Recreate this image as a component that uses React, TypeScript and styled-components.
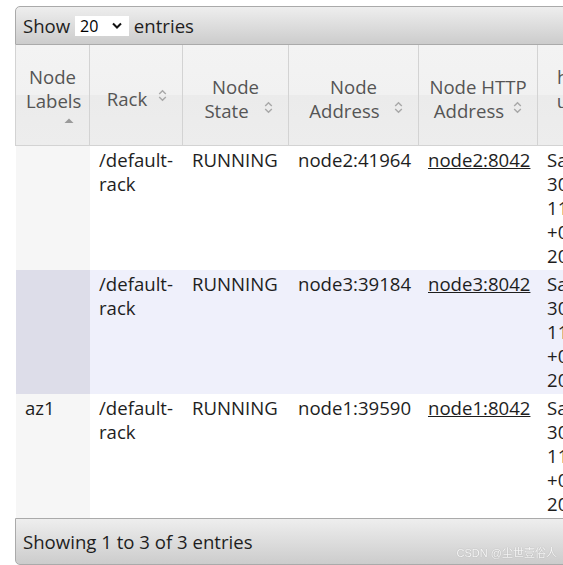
import React from 'react';
import styled, { createGlobalStyle } from 'styled-components';

const FONT = `"Open Sans", "Noto Sans CJK SC", sans-serif`;

const GlobalStyle = createGlobalStyle`
  html, body { margin: 0; padding: 0; background: #fff; overflow: hidden; }
  body { font-family: ${FONT}; }
`;

const Wrapper = styled.div`
  margin: 6px 0 0 15px;
  width: 623px;
  font-family: ${FONT};
  font-size: 18.6px;
  color: #1e1e1e;
`;

const Bar = styled.div<{ $pos: 'top' | 'bottom' }>`
  display: flex;
  align-items: center;
  box-sizing: border-box;
  height: ${(p) => (p.$pos === 'top' ? 39 : 47)}px;
  padding: 0 7px;
  border: 1px solid #aaa;
  border-radius: ${(p) => (p.$pos === 'top' ? '5px 5px 0 0' : '0 0 5px 5px')};
  background: linear-gradient(to bottom, #eeeeee 0%, #cccccc 100%);
  color: #1e1e1e;
  white-space: pre;
`;

const Select = styled.span`
  display: inline-flex;
  align-items: center;
  justify-content: space-between;
  box-sizing: border-box;
  width: 54px;
  height: 20px;
  margin: 0;
  padding: 0 7px 0 5px;
  background: #fff;
  font-size: 16px;
  color: #000;
`;

const Table = styled.table`
  border-collapse: separate;
  border-spacing: 0;
  table-layout: fixed;
  width: 623px;
`;

const Col = styled.col<{ $w: number }>`
  width: ${(p) => p.$w}px;
`;

const Th = styled.th<{ $first?: boolean }>`
  box-sizing: border-box;
  padding: 20px 10px 12px 10px;
  border-right: 1px solid #d3d3d3;
  border-bottom: 1px solid #d3d3d3;
  border-left: ${(p) => (p.$first ? '1px solid #d3d3d3' : 'none')};
  background: linear-gradient(to bottom, #f3f3f3 0%, #f1f1f1 50%, #ebebeb 50%, #ededed 100%);
  color: #555;
  font-weight: normal;
  text-align: center;
  vertical-align: middle;
  line-height: 24px;
  overflow: visible;
`;

const SortIcon = styled.span<{ $w: number }>`
  float: right;
  display: block;
  width: ${(p) => p.$w}px;
  height: 16px;
  margin: 0 5px 4px 4px;
  svg { display: block; }
`;

const Td = styled.td<{ $bg: string; $first?: boolean }>`
  box-sizing: border-box;
  padding: 2px 9px;
  line-height: 24px;
  vertical-align: top;
  background: ${(p) => p.$bg};
  background-clip: padding-box;
  border-left: ${(p) => (p.$first ? '1px solid transparent' : 'none')};
  color: #1e1e1e;
`;

const Link = styled.a`
  color: #1e1e1e;
  text-decoration: underline;
`;

const Watermark = styled.div`
  position: fixed;
  right: 6px;
  bottom: 4px;
  font-family: "Liberation Sans", "Noto Sans CJK SC", sans-serif;
  font-size: 11px;
  line-height: 16px;
  color: rgba(255, 255, 255, 0.9);
  text-shadow: 0 0 1px rgba(0, 0, 0, 0.3);
  white-space: nowrap;
`;

type Sort = 'asc' | 'both';

const columns: { title: string; width: number; sort: Sort }[] = [
  { title: 'Node Labels', width: 75, sort: 'asc' },
  { title: 'Rack', width: 93, sort: 'both' },
  { title: 'Node State', width: 106, sort: 'both' },
  { title: 'Node Address', width: 130, sort: 'both' },
  { title: 'Node HTTP Address', width: 119, sort: 'both' },
  { title: 'health-update', width: 100, sort: 'both' },
];

const rows = [
  { labels: '', rack: '/default-rack', state: 'RUNNING', addr: 'node2:41964', http: 'node2:8042', update: 'Sat Sep 30 11:04:21 +0800 2023' },
  { labels: '', rack: '/default-rack', state: 'RUNNING', addr: 'node3:39184', http: 'node3:8042', update: 'Sat Sep 30 11:04:22 +0800 2023' },
  { labels: 'az1', rack: '/default-rack', state: 'RUNNING', addr: 'node1:39590', http: 'node1:8042', update: 'Sat Sep 30 11:04:20 +0800 2023' },
];

function SortGlyph({ dir }: { dir: Sort }) {
  if (dir === 'asc') {
    return (
      <svg width="10" height="16" viewBox="0 0 10 16">
        <polygon points="0.5,10 5,5.5 9.5,10" fill="#9a9a9a" />
      </svg>
    );
  }
  return (
    <svg width="9" height="16" viewBox="0 0 9 16">
      <polyline points="1.2,7 4.5,3.7 7.8,7" fill="none" stroke="#a8a8a8" strokeWidth="1.4" />
      <polyline points="1.2,10 4.5,13.3 7.8,10" fill="none" stroke="#a8a8a8" strokeWidth="1.4" />
    </svg>
  );
}

function Chevron() {
  return (
    <svg width="10" height="7" viewBox="0 0 10 7">
      <polyline points="1,1.5 5,5.5 9,1.5" fill="none" stroke="#111" strokeWidth="2" />
    </svg>
  );
}

export default function App() {
  return (
    <>
      <GlobalStyle />
      <Wrapper>
        <Bar $pos="top">
          Show <Select>20<Chevron /></Select> entries
        </Bar>
        <Table>
          <colgroup>
            {columns.map((c) => (
              <Col key={c.title} $w={c.width} />
            ))}
          </colgroup>
          <thead>
            <tr>
              {columns.map((c, i) => (
                <Th key={c.title} $first={i === 0}>
                  {c.title}
                  <SortIcon $w={c.sort === 'asc' ? 10 : 9}>
                    <SortGlyph dir={c.sort} />
                  </SortIcon>
                </Th>
              ))}
            </tr>
          </thead>
          <tbody>
            {rows.map((r, i) => {
              const even = i % 2 === 1;
              const bg = even ? '#eff0fb' : '#ffffff';
              const sortBg = even ? '#dddde9' : '#f6f6f6';
              return (
                <tr key={r.addr}>
                  <Td $bg={sortBg} $first>{r.labels}</Td>
                  <Td $bg={bg}>{r.rack}</Td>
                  <Td $bg={bg}>{r.state}</Td>
                  <Td $bg={bg}>{r.addr}</Td>
                  <Td $bg={bg}><Link href="#">{r.http}</Link></Td>
                  <Td $bg={bg}>{r.update}</Td>
                </tr>
              );
            })}
          </tbody>
        </Table>
        <Bar $pos="bottom">Showing 1 to 3 of 3 entries</Bar>
      </Wrapper>
      <Watermark>CSDN @尘世壹俗人</Watermark>
    </>
  );
}
